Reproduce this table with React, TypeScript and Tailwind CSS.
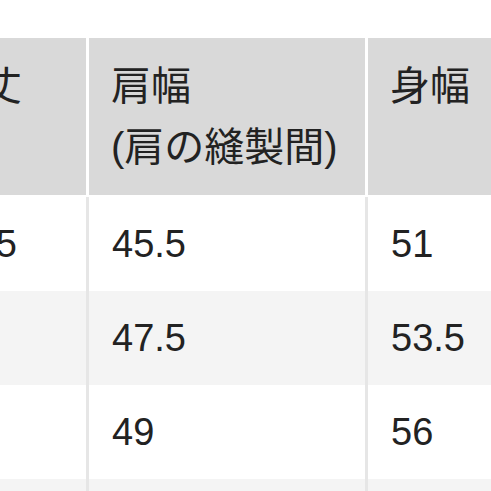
const font = { fontFamily: '"Liberation Sans", "Noto Sans CJK JP", sans-serif' };

type Row = { length: string; shoulder: string; body: string };

const rows: Row[] = [
  { length: "65.5", shoulder: "45.5", body: "51" },
  { length: "67", shoulder: "47.5", body: "53.5" },
  { length: "69", shoulder: "49", body: "56" },
  { length: "71", shoulder: "50.5", body: "59" },
];

function HeaderCell({ children, first, width }: { children: React.ReactNode; first?: boolean; width: string }) {
  return (
    <div
      className={`${width} shrink-0 bg-[#d9d9d9] pl-[22px] pt-[18px] pb-[17px] text-[40px] leading-[61px] text-[#222] ${
        first ? "" : "border-l-[3px] border-white"
      }`}
    >
      {children}
    </div>
  );
}

function BodyCell({ children, first, width }: { children: React.ReactNode; first?: boolean; width: string }) {
  return (
    <div
      className={`${width} flex shrink-0 items-center pl-[23px] text-[38px] leading-none text-[#222] ${
        first ? "" : "border-l-[3px] border-[#e6e6e6]"
      }`}
    >
      {children}
    </div>
  );
}

export default function App() {
  return (
    <div className="h-[491px] w-[491px] overflow-hidden bg-white" style={font}>
      <div className="-ml-[80px] w-[900px] pt-[38px]">
        <div className="flex">
          <HeaderCell first width="w-[166px]">着丈</HeaderCell>
          <HeaderCell width="w-[279px]">
            <div>肩幅</div>
            <div>(肩の縫製間)</div>
          </HeaderCell>
          <HeaderCell width="w-[279px]">身幅</HeaderCell>
          <HeaderCell width="w-[176px]">袖丈</HeaderCell>
        </div>
        <div className="mt-[2px]">
          {rows.map((row, i) => (
            <div key={i} className={`flex h-[94px] ${i % 2 === 1 ? "bg-[#f4f4f4]" : "bg-white"}`}>
              <BodyCell first width="w-[166px]">{row.length}</BodyCell>
              <BodyCell width="w-[279px]">{row.shoulder}</BodyCell>
              <BodyCell width="w-[279px]">{row.body}</BodyCell>
              <BodyCell width="w-[176px]">61</BodyCell>
            </div>
          ))}
        </div>
      </div>
    </div>
  );
}
